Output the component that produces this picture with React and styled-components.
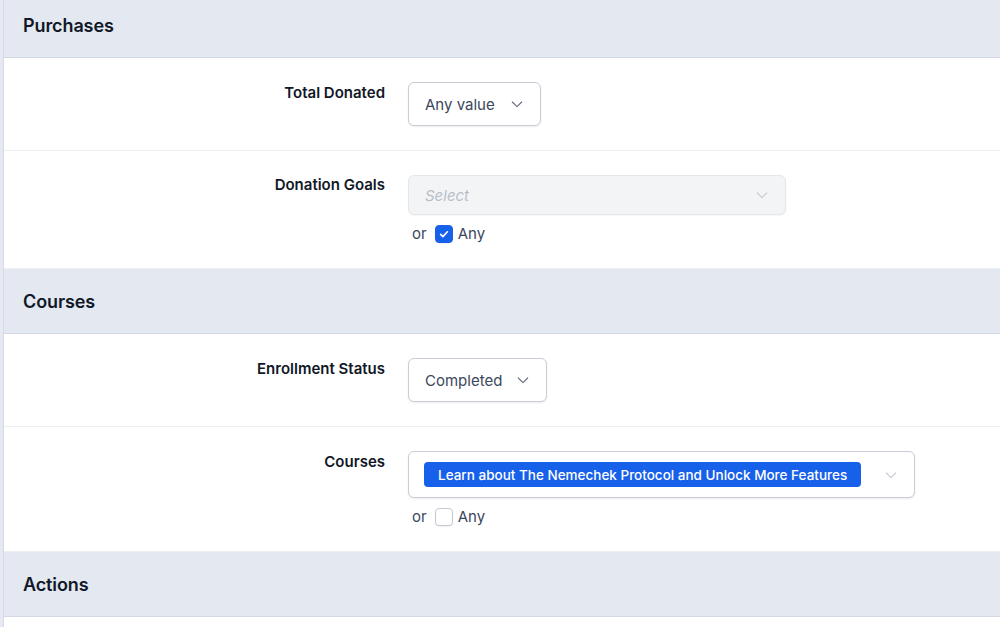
import styled, { createGlobalStyle } from 'styled-components';

const GlobalStyle = createGlobalStyle`
  body {
    margin: 0;
    background: #e6e9f1;
    font-family: Inter, "Noto Sans", "Liberation Sans", sans-serif;
    color: #111827;
  }
`;

const Panel = styled.div`
  margin-top: -7px;
  margin-left: 3px;
  border-left: 1px solid #d6dae4;
  background: #fff;
  min-height: 700px;
`;

const SectionHeader = styled.div`
  height: 64px;
  display: flex;
  align-items: center;
  padding: 0 19px;
  background: #e4e8f1;
  border-bottom: 1px solid #d3d8e5;
  font-size: 18px;
  font-weight: 600;
  color: #111827;
  letter-spacing: -0.1px;
`;

const Row = styled.div`
  display: grid;
  grid-template-columns: 381px 1fr;
  column-gap: 23px;
  padding: 24px 0;
  border-bottom: 1px solid #eeeff2;

  &:last-child {
    border-bottom: none;
  }
`;

const Label = styled.div`
  text-align: right;
  font-size: 15px;
  font-weight: 600;
  line-height: 20px;
  padding-top: ${(p) => p.pt || 0}px;
  color: #111827;
`;

const Field = styled.div`
  display: flex;
  flex-direction: column;
  align-items: flex-start;
  gap: 9px;
`;

const SelectBox = styled.div`
  box-sizing: border-box;
  width: ${(p) => p.w}px;
  height: ${(p) => p.h || 44}px;
  display: flex;
  align-items: center;
  justify-content: space-between;
  padding: 0 15px 0 16px;
  border: 1px solid ${(p) => (p.disabled ? '#e3e6eb' : '#c8cdd6')};
  border-radius: 6px;
  background: ${(p) => (p.disabled ? '#f3f4f6' : '#fff')};
  box-shadow: ${(p) => (p.disabled ? '0 1px 2px rgba(0,0,0,0.04)' : '0 1px 2px rgba(0,0,0,0.08)')};
  font-size: 15px;
  color: #3b475c;
`;

const Placeholder = styled.span`
  font-style: italic;
  color: #b9bfc9;
`;

const Chip = styled.span`
  display: inline-flex;
  align-items: center;
  height: 25px;
  padding: 0 14px;
  margin-left: -1px;
  border-radius: 4px;
  background: #1760ea;
  color: #fff;
  font-size: 13.5px;
  font-weight: 500;
`;

const Chevron = ({ light }) => (
  <svg width="16" height="16" viewBox="0 0 24 24" fill="none" stroke={light ? '#c9cdd4' : '#6b7280'} strokeWidth="1.8" strokeLinecap="round" strokeLinejoin="round">
    <path d="M5 9l7 7 7-7" />
  </svg>
);

const OrLine = styled.div`
  display: flex;
  align-items: center;
  gap: 5px;
  padding-left: 4px;
  font-size: 15px;
  line-height: 20px;
  color: #3b475c;
`;

const Check = styled.span`
  box-sizing: border-box;
  width: 18px;
  height: 18px;
  margin-left: 3px;
  border-radius: 4px;
  display: inline-flex;
  align-items: center;
  justify-content: center;
  background: ${(p) => (p.checked ? '#1760ea' : '#fff')};
  border: 1px solid ${(p) => (p.checked ? '#1760ea' : '#c3c8d1')};
  box-shadow: 0 1px 1px rgba(0,0,0,0.06);
`;

const AnyCheck = ({ checked }) => (
  <OrLine>
    or
    <Check checked={checked}>
      {checked && (
        <svg width="12" height="12" viewBox="0 0 16 16" fill="none" stroke="#fff" strokeWidth="2.2" strokeLinecap="round" strokeLinejoin="round">
          <path d="M3.5 8.5l3 3 6-6.5" />
        </svg>
      )}
    </Check>
    Any
  </OrLine>
);

const App = () => {
  return (
    <>
      <GlobalStyle />
      <Panel>
        <SectionHeader>Purchases</SectionHeader>
        <Row>
          <Label pt={1}>Total Donated</Label>
          <Field>
            <SelectBox w={133}>
              Any value
              <Chevron />
            </SelectBox>
          </Field>
        </Row>
        <Row>
          <Label pt={0}>Donation Goals</Label>
          <Field>
            <SelectBox w={378} h={40} disabled>
              <Placeholder>Select</Placeholder>
              <Chevron light />
            </SelectBox>
            <AnyCheck checked />
          </Field>
        </Row>

        <SectionHeader>Courses</SectionHeader>
        <Row>
          <Label pt={1}>Enrollment Status</Label>
          <Field>
            <SelectBox w={139}>
              Completed
              <Chevron />
            </SelectBox>
          </Field>
        </Row>
        <Row>
          <Label pt={1}>Courses</Label>
          <Field>
            <SelectBox w={507} h={47}>
              <Chip>Learn about The Nemechek Protocol and Unlock More Features</Chip>
              <Chevron light />
            </SelectBox>
            <AnyCheck />
          </Field>
        </Row>

        <SectionHeader>Actions</SectionHeader>
      </Panel>
    </>
  );
};

export default App;
